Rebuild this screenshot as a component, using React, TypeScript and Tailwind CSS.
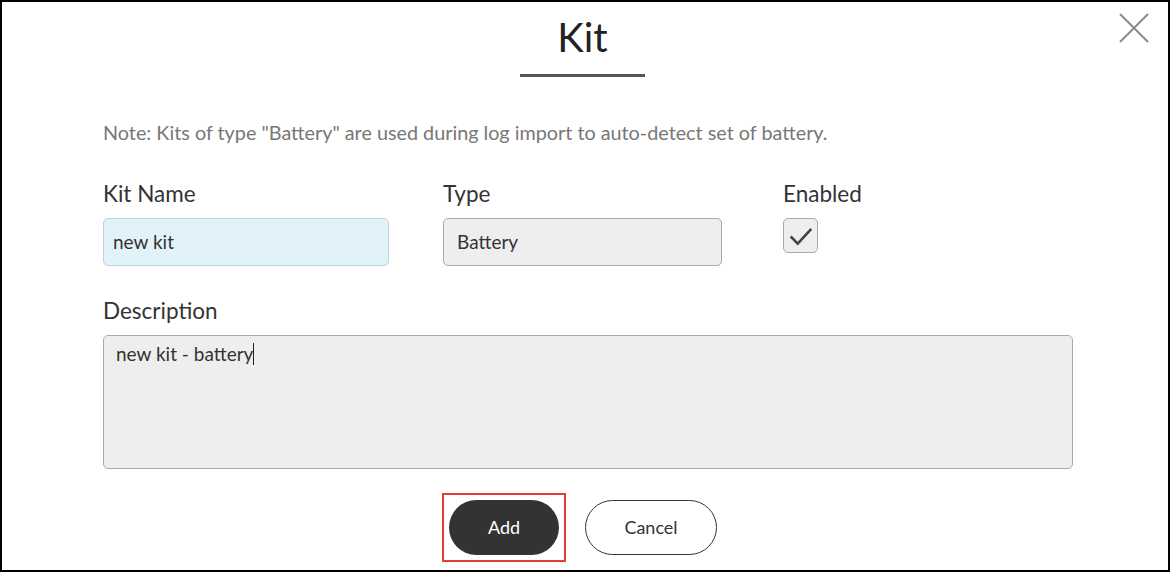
import React from "react";

export default function App() {
  return (
    <div className="relative h-[572px] w-[1170px] overflow-hidden border-2 border-black bg-white font-['Lato','Noto_Sans',sans-serif] text-[#333]">
      {/* Close */}
      <button type="button" className="absolute right-[18px] top-[10px] h-[32px] w-[32px]">
        <svg viewBox="0 0 32 32" className="h-full w-full" fill="none" stroke="#8a8a8a" strokeWidth="2">
          <path d="M2 2 L30 30 M30 2 L2 30" />
        </svg>
      </button>

      {/* Header */}
      <div className="flex flex-col items-center pr-[5px] pt-[11px]">
        <h1 className="text-[40px] leading-[48px] text-[#222]">Kit</h1>
        <div className="mt-[13px] h-[3px] w-[125px] bg-[#555]" />
      </div>

      <div className="pl-[101px] pr-[95px]">
        <p className="mt-[43px] text-[19.8px] leading-[24px] text-[#777]">
          Note: Kits of type "Battery" are used during log import to auto-detect set of battery.
        </p>

        <div className="mt-[37px] flex">
          <div className="w-[340px]">
            <div className="text-[22.5px] leading-[26px]">Kit Name</div>
            <div className="mt-[11px] flex h-[48px] w-[286px] items-center rounded-[5px] border border-[#bfd3db] bg-[#e1f3f9] px-[9px] text-[19px]">
              new kit
            </div>
          </div>
          <div className="w-[340px]">
            <div className="text-[22.5px] leading-[26px]">Type</div>
            <div className="mt-[11px] flex h-[48px] w-[279px] items-center rounded-[5px] border border-[#aaa] bg-[#eee] px-[13px] text-[19px]">
              Battery
            </div>
          </div>
          <div>
            <div className="text-[22.5px] leading-[26px]">Enabled</div>
            <div className="mt-[11px] flex h-[35px] w-[35px] items-center justify-center rounded-[5px] border border-[#aaa] bg-[#eee]">
              <svg viewBox="0 0 24 24" className="h-[26px] w-[26px]" fill="none" stroke="#444" strokeWidth="2.4">
                <path d="M2.5 12.5 L9 19 L21.5 5.5" />
              </svg>
            </div>
          </div>
        </div>

        <div className="mt-[32px] text-[22.5px] leading-[26px]">Description</div>
        <div className="mt-[11px] h-[134px] w-[970px] rounded-[5px] border border-[#aaa] bg-[#eee] px-[12px] pt-[3px] text-[19px] leading-[26px]">
          new kit - battery<span className="inline-block h-[22px] w-px translate-y-[4px] bg-[#222]" />
        </div>
      </div>

      <div className="mt-[24px] flex justify-center gap-[19px] pr-[11px]">
        <div className="border-2 border-[#e03c3c] p-[5px]">
          <button type="button" className="h-[55px] w-[110px] rounded-full bg-[#333] text-[18px] text-white">
            Add
          </button>
        </div>
        <div className="pt-[7px]">
          <button type="button" className="h-[55px] w-[132px] rounded-full border-[1.5px] border-[#333] bg-white text-[18px] text-[#333]">
            Cancel
          </button>
        </div>
      </div>
    </div>
  );
}
